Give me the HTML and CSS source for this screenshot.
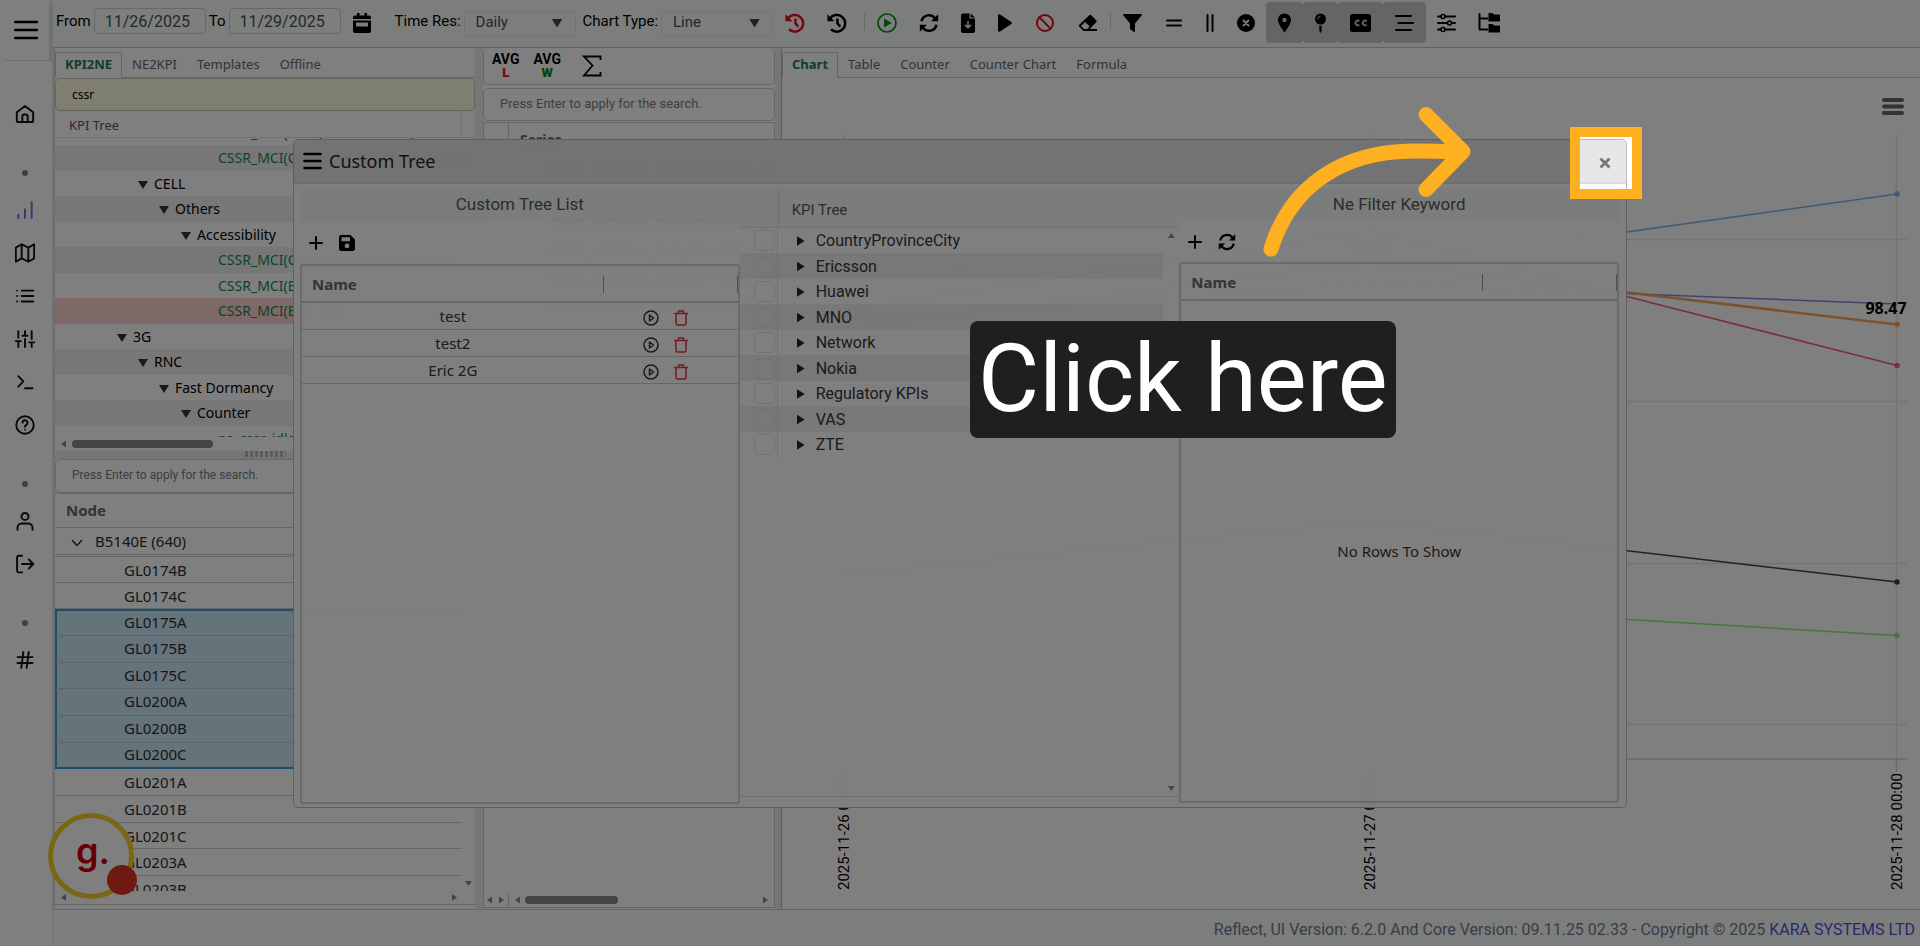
FILE: index.html
```html
<!DOCTYPE html>
<html lang="en">
<head>
<meta charset="utf-8">
<title>Reflect</title>
<link rel="stylesheet" href="styles.css">
</head>
<body>
<div class="app">
  <nav class="sidebar" aria-label="Main">
    <button class="sidebar-toggle" aria-label="Menu"><svg width="24" height="20" viewBox="0 0 24 20"><path d="M1 2h22M1 10h22M1 18h22" stroke="currentColor" stroke-width="2.4" stroke-linecap="round"/></svg></button>
    <div class="nav-group nav-first">
      <a href="#" aria-label="Home"><svg class="nav-icon" viewBox="0 0 24 24"><path d="M3 21.5h18a.8.8 0 0 0 .8-.8V9.8L12 2.3 2.2 9.800v10.900a.8.8 0 0 0 .8.8zM8.800 21.500v-7a2 2 0 0 1 2-2h2.400a2 2 0 0 1 2 2v7"/></svg></a>
    </div>
    <span class="dot"></span>
    <div class="nav-group">
      <a href="#" class="active" aria-label="Charts"><svg class="nav-icon" viewBox="0 0 24 24"><path d="M4 17.500v4M12 11v10.500M20 2.500v19"/></svg></a>
      <a href="#" aria-label="Map"><svg class="nav-icon" viewBox="0 0 24 24"><path d="M1 5.500v17l7-4 8 4 7-4v-17l-7 4-8-4zM8 1.500v17M16 5.500v17"/></svg></a>
      <a href="#" aria-label="List"><svg class="nav-icon" viewBox="0 0 24 24"><path d="M8 5.500h14M8 12h14M8 18.500h14M2.500 5.500h.01M2.500 12h.01M2.500 18.500h.01"/></svg></a>
      <a href="#" aria-label="Settings"><svg class="nav-icon" viewBox="0 0 24 24"><path d="M4 21.500v-7M4 10.500v-8M12 21.500v-9.500M12 8v-5.500M20 21.500v-5.500M20 12v-9.500M1 14.500h6M9 8h6M17 16h6"/></svg></a>
      <a href="#" aria-label="Console"><svg class="nav-icon" viewBox="0 0 24 24"><path d="M4 17.500l6-6.200-6-6.300M12 19.500h9"/></svg></a>
      <a href="#" aria-label="Help"><svg class="nav-icon" viewBox="0 0 24 24"><circle cx="12" cy="12" r="10.500"/><path d="M9 9.200a3 3 0 1 1 4.200 2.900c-.9.500-1.200 1-1.200 1.900M12 17.500h.01"/></svg></a>
    </div>
    <span class="dot"></span>
    <div class="nav-group">
      <a href="#" aria-label="Profile"><svg class="nav-icon" viewBox="0 0 24 24"><circle cx="12" cy="6.500" r="4.200"/><path d="M3 22.500v-2.500a5 5 0 0 1 5-5h8a5 5 0 0 1 5 5v2.500"/></svg></a>
      <a href="#" aria-label="Log out"><svg class="nav-icon" viewBox="0 0 24 24"><path d="M8.500 22h-4a2 2 0 0 1-2-2V4a2 2 0 0 1 2-2h4M16.500 17.500l5.500-5.500-5.500-5.500M22 12H8.500"/></svg></a>
    </div>
    <span class="dot"></span>
    <div class="nav-group nav-last">
      <a href="#" aria-label="Channels"><svg class="nav-icon" viewBox="0 0 24 24"><path d="M3 8.500h18M3 15.500h18M10 2.500L7.500 21.500M16.500 2.500L14 21.500"/></svg></a>
    </div>
  </nav>

  <header class="topbar">
    <label for="from">From</label><input class="date" id="from" value="11/26/2025">
    <label for="to">To</label><input class="date" id="to" value="11/29/2025">
    <button class="calendar" aria-label="Calendar"><svg width="18" height="20" viewBox="0 0 18 20"><path fill="currentColor" fill-rule="evenodd" d="M4 0h2.500v2.500h5V0H14v2.500h2a2 2 0 0 1 2 2V6H0V4.500a2 2 0 0 1 2-2h2zM0 7.500h18V18a2 2 0 0 1-2 2H2a2 2 0 0 1-2-2zM3 9.500v4h12v-4z"/></svg></button>
    <label for="res" class="label-res">Time Res:</label><span class="pick"><select id="res"><option>Daily</option></select></span>
    <label for="type">Chart Type:</label><span class="pick"><select id="type"><option>Line</option></select></span>
    <div class="tools">
      <button class="red" aria-label="Clear history"><svg width="20" height="20" viewBox="0 0 24 24"><path class="s3" d="M3.500 6.800A10 10 0 1 1 4.800 19.500M12.500 6.500v6l3.500 3.800"/><path class="f" d="M.500 1.500v8.500h8.500z"/></svg></button>
      <button aria-label="History"><svg width="20" height="20" viewBox="0 0 24 24"><path class="s3" d="M3.500 6.800A10 10 0 1 1 4.800 19.500M12.500 6.500v6l3.500 3.800"/><path class="f" d="M.500 1.500v8.500h8.500z"/></svg></button>
      <span class="sep"></span>
      <button class="green" aria-label="Run"><svg width="20" height="20" viewBox="0 0 24 24"><circle class="s2" cx="12" cy="12" r="10.800"/><path class="f" d="M8.500 6.500v11l9-5.500z"/></svg></button>
      <button aria-label="Refresh"><svg width="20" height="20" viewBox="0 0 24 24"><path class="s3" d="M3 10A9.200 9.200 0 0 1 19.500 6.500M21 14A9.200 9.200 0 0 1 4.500 17.500"/><path class="f" d="M23 1.500v8.500h-8.500zM1 22.500V14h8.500z"/></svg></button>
      <button aria-label="Download"><svg width="14" height="20" viewBox="0 0 14 20"><path class="f" fill-rule="evenodd" d="M2 .5h6.500V5.500H14V18a2 2 0 0 1-2 2H2a2 2 0 0 1-2-2V2.500a2 2 0 0 1 2-2zM6.300 8v5L4.500 11.300 3.500 12.400 7 15.800l3.500-3.400-1-1.100L7.700 13V8zM9.700.5 14 4.500H9.700z"/></svg></button>
      <button aria-label="Play"><svg width="14" height="20" viewBox="0 0 14 20"><path class="f" d="M0 2.500C0 1.200 1 .8 2 1.400l11.300 7.500q1.200 1.100 0 2.200L2 18.600c-1 .6-2 .2-2-1.100z"/></svg></button>
      <button class="red" aria-label="Stop"><svg width="18" height="20" viewBox="0 0 18 20"><circle class="s2" cx="9" cy="10" r="8"/><path class="s2" d="M3.300 4.300l11.400 11.400"/></svg></button>
      <button aria-label="Erase"><svg width="20" height="20" viewBox="0 0 20 20"><path class="f" fill-rule="evenodd" d="M11.200 2.300q1-.9 2 0l5 5q1 1 0 2L11.800 16H19v2H5.500L1.300 13.800q-1-1 0-2zM7 8.900l-4 4L6.100 16h3l2.700-2.600z"/></svg></button>
      <span class="sep thin"></span>
      <button aria-label="Filter"><svg width="19" height="20" viewBox="0 0 19 20"><path class="f" d="M1 1h17q1.400.4.6 1.600L12 10.500v7.800q-.4 1-1.400.4L7 16v-5.500L.4 2.600Q-.3 1.400 1 1z"/></svg></button>
      <button aria-label="Equals"><svg width="16" height="20" viewBox="0 0 16 20"><path class="s2" d="M1 7.500h14M1 12.500h14"/></svg></button>
      <button aria-label="Parallel"><svg width="8" height="20" viewBox="0 0 8 20"><path class="s2" d="M1.500 2v16M6.500 2v16"/></svg></button>
      <button aria-label="Close"><svg width="18" height="20" viewBox="0 0 18 20"><circle class="f" cx="9" cy="10" r="9"/><path d="M6.500 7.500l5 5M11.500 7.500l-5 5" stroke="#f8fcfa" stroke-width="1.800" stroke-linecap="round"/></svg></button>
      <button class="on" aria-label="Marker"><svg width="13" height="20" viewBox="0 0 13 20"><path class="f" fill-rule="evenodd" d="M6.500.5A6.400 6.400 0 0 1 13 7c0 3.500-3.500 8.500-6.500 12.500C3.500 15.500 0 10.500 0 7A6.400 6.400 0 0 1 6.500.5zm0 4.200a2.200 2.200 0 1 0 0 4.400 2.200 2.200 0 0 0 0-4.400z"/></svg></button>
      <button class="on" aria-label="Pin"><svg width="11" height="20" viewBox="0 0 11 20"><circle class="f" cx="5.500" cy="6" r="5.500"/><path class="f" d="M4.300 12.800h2.400V18l-1.200 2-1.200-2z"/><path d="M2.800 6a2.800 2.800 0 0 1 2.700-2.700" fill="none" stroke="#c8cccb"/></svg></button>
      <button class="on" aria-label="Captions"><svg width="21" height="20" viewBox="0 0 21 20"><rect class="f" y="1" width="21" height="18" rx="2.500"/><path d="M9.300 8.300a2.300 2.300 0 1 0 0 3.400M16.600 8.300a2.300 2.300 0 1 0 0 3.400" fill="none" stroke="#c8cccb" stroke-width="1.800"/></svg></button>
      <button class="on" aria-label="Align"><svg width="19" height="20" viewBox="0 0 19 20"><path class="s2" d="M1 3h15M3.500 10H18M1 17h15"/></svg></button>
      <button aria-label="Options"><svg width="19" height="20" viewBox="0 0 19 20"><path class="s2" d="M1 3.500h3M8 3.500h10M1 10h9.500M14.500 10H18M1 16.500h3M8 16.500h10"/><circle class="s1" cx="6" cy="3.500" r="2"/><circle class="s1" cx="12.500" cy="10" r="2"/><circle class="s1" cx="6" cy="16.500" r="2"/></svg></button>
      <button aria-label="Folder tree"><svg width="22" height="20" viewBox="0 0 22 20"><path class="s2" d="M1.500 1v15.500h8M1.500 5.500h8"/><path class="f" d="M10.500 0h4l1.500 1.500h5q1 0 1 1V7.500q0 1-1 1H10.500zM10.500 11h4l1.500 1.500h5q1 0 1 1V18.500q0 1-1 1H10.500z"/></svg></button>
    </div>
  </header>

  <main class="workspace">
    <section class="col-left">
      <div class="tabs"><button class="tab current">KPI2NE</button><button class="tab">NE2KPI</button><button class="tab">Templates</button><button class="tab">Offline</button></div>
      <input class="search filled" aria-label="Search KPI" value="cssr">
      <div class="tree-head"><span>KPI Tree</span></div>
      <div class="tree-view">
        <ul class="tree">
          <li class="lv5 leaf">CSSR_MCI(Congestion_Ex_In_(Huawei_Cell)</li>
          <li class="lv5 leaf">CSSR_MCI(Congestion_excluded)(Eric_Cell)</li>
          <li class="lv2 open">CELL</li>
          <li class="lv3 open">Others</li>
          <li class="lv4 open">Accessibility</li>
          <li class="lv5 leaf">CSSR_MCI(Congestion_excluded)(Eric</li>
          <li class="lv5 leaf">CSSR_MCI(Eric)</li>
          <li class="lv5 leaf picked">CSSR_MCI(Eric_Cell)</li>
          <li class="lv1 open">3G</li>
          <li class="lv2 open">RNC</li>
          <li class="lv3 open">Fast Dormancy</li>
          <li class="lv4 open">Counter</li>
          <li class="lv5 leaf">ps_cssr_idle</li>
        </ul>
      </div>
      <div class="hscroll"><i class="tri left"></i><i class="thumb"></i></div>
      <div class="splitter"></div>
      <input class="search small" aria-label="Search node" placeholder="Press Enter to apply for the search.">
      <div class="node-grid">
        <div class="node-view">
          <table>
            <thead><tr><th>Node</th></tr></thead>
            <tbody class="group"><tr><td><svg width="12" height="8" viewBox="0 0 12 8"><path d="M1 1l5 5.500L11 1" fill="none" stroke="currentColor" stroke-width="1.500"/></svg>B5140E (640)</td></tr></tbody>
            <tbody class="nodes">
              <tr><td>GL0174B</td></tr><tr><td>GL0174C</td></tr>
              <tr class="sel first"><td>GL0175A</td></tr><tr class="sel"><td>GL0175B</td></tr><tr class="sel"><td>GL0175C</td></tr><tr class="sel"><td>GL0200A</td></tr><tr class="sel"><td>GL0200B</td></tr><tr class="sel last"><td>GL0200C</td></tr>
              <tr><td>GL0201A</td></tr><tr><td>GL0201B</td></tr><tr><td>GL0201C</td></tr><tr><td>GL0203A</td></tr><tr><td>GL0203B</td></tr>
            </tbody>
          </table>
          <i class="tri down"></i>
        </div>
        <div class="hscroll ends"><i class="tri left"></i><i class="tri right"></i></div>
      </div>
    </section>

    <section class="col-mid">
      <div class="mid-tools">
        <button>AVG<b class="l">L</b></button><button>AVG<b class="w">W</b></button>
        <button aria-label="Sum"><svg width="20" height="22" viewBox="0 0 20 22"><path d="M18.500 5V1.500H2l8.500 9L2 20.500h16.500V17" fill="none" stroke="currentColor" stroke-width="1.800"/></svg></button>
      </div>
      <input class="search" aria-label="Search series" placeholder="Press Enter to apply for the search.">
      <div class="series">
        <div class="series-body">
          <ul>
            <li class="series-head">Series</li>
            <li>CSSR_MCI(Eric_Cell),B5140E | GL</li><li>CSSR_MCI(Eric_Cell),B5140E | GL</li><li>CSSR_MCI(Eric_Cell),B5140E | GL</li><li>CSSR_MCI(Eric_Cell),B5140E | GL</li><li>CSSR_MCI(Eric_Cell),B5140E | GL</li><li>CSSR_MCI(Eric_Cell),B5140E | GL</li>
          </ul>
        </div>
        <div class="hscroll mid-scroll"><span class="pin-scroll"><i class="tri left"></i><i class="tri right"></i></span><i class="tri left"></i><i class="thumb"></i><i class="tri right"></i></div>
      </div>
    </section>

    <section class="col-chart">
      <div class="tabs"><button class="tab current">Chart</button><button class="tab">Table</button><button class="tab">Counter</button><button class="tab">Counter Chart</button><button class="tab">Formula</button></div>
      <div class="chart">
        <svg viewBox="782 78 1138 831" preserveAspectRatio="xMaxYMin meet" fill="none">
          <path d="M844.500 135v624M1370.500 135v624M1896.500 135v624M800 239.500h1107M800 401.500h1107M800 563.500h1107M800 724.500h1107" stroke="#e6e6e6" stroke-width="1.500"/>
          <path d="M800 759h1107M1896.500 759v13M1370.500 759v13M844.500 759v13" stroke="#ccd6eb" stroke-width="1.500"/>
          <path d="M844 270L1370 268L1897 194" stroke="#7cb5ec" stroke-width="1.500"/>
          <path d="M844 320L1370 284L1897 304" stroke="#8085e9" stroke-width="1.500"/>
          <path d="M844 330L1370 262L1897 324.500" stroke="#f7a35c" stroke-width="2.500"/>
          <path d="M844 310L1370 231L1897 365.500" stroke="#f15c80" stroke-width="1.500"/>
          <path d="M844 575L1370 521L1897 582" stroke="#434348" stroke-width="1.500"/>
          <path d="M844 650L1370 604L1897 635.500" stroke="#90ed7d" stroke-width="1.500"/>
          <circle cx="1897" cy="194" r="2.800" fill="#7cb5ec"/><circle cx="1897" cy="324.500" r="2.800" fill="#f7a35c"/><circle cx="1897" cy="365.500" r="2.800" fill="#f15c80"/><circle cx="1897" cy="582" r="2.800" fill="#434348"/><circle cx="1897" cy="635.500" r="2.800" fill="#90ed7d"/>
          <text class="value" x="1886" y="314">98.47</text>
          <text class="value" x="1370" y="252">98.86</text>
          <g class="axis"><text transform="translate(849 890) rotate(-90)">2025-11-26 00:00</text><text transform="translate(1375 890) rotate(-90)">2025-11-27 00:00</text><text transform="translate(1902 890) rotate(-90)">2025-11-28 00:00</text></g>
          <path d="M1884 100h18M1884 106.500h18M1884 113h18" stroke="#666" stroke-width="4" stroke-linecap="round"/>
        </svg>
      </div>
    </section>
  </main>

  <footer class="footer">Reflect, UI Version: 6.2.0 And Core Version: 09.11.25 02.33 - Copyright © 2025&nbsp;<a href="#">KARA SYSTEMS LTD</a></footer>
</div>

<div class="badge"><span>g.</span><i></i></div>

<div class="modal" role="dialog" aria-label="Custom Tree">
  <div class="modal-head"><svg width="19" height="18" viewBox="0 0 19 18"><path d="M1.500 2h16M1.500 9h16M1.500 16h16" stroke="#000" stroke-width="2.600" stroke-linecap="round"/></svg><h2>Custom Tree</h2><button aria-label="Close dialog"><svg width="12" height="12" viewBox="0 0 12 12"><path d="M1.500 1.500l9 9M10.500 1.500l-9 9" stroke="currentColor" stroke-width="3"/></svg></button></div>
  <div class="modal-body">
    <section class="pane">
      <h3>Custom Tree List</h3>
      <div class="pane-tools"><button aria-label="Add"><svg width="14" height="14" viewBox="0 0 14 14"><path class="s2" d="M7 1v12M1 7h12"/></svg></button><button aria-label="Save"><svg width="16" height="16" viewBox="0 0 16 16"><path class="f" fill-rule="evenodd" d="M2 0h9.500L16 4.500V14a2 2 0 0 1-2 2H2a2 2 0 0 1-2-2V2a2 2 0 0 1 2-2zm.5 2.200v4h8.500v-4zM8 8.500a2.400 2.400 0 1 0 0 4.800 2.400 2.400 0 0 0 0-4.800z"/></svg></button></div>
      <div class="grid">
        <table>
          <thead><tr><th class="name">Name</th><th class="act"></th></tr></thead>
          <tbody>
            <tr><td>test</td><td class="act"><div><button aria-label="Run test"><svg width="16" height="16" viewBox="0 0 16 16"><circle class="s1" cx="8" cy="8" r="7"/><path class="s1" d="M6.500 5v6l4-3z"/></svg></button><button class="del" aria-label="Delete test"><svg width="14" height="16" viewBox="0 0 14 16"><path class="s1" d="M.500 3.500h13M2 3.500V13.500q0 1.500 1.500 1.500h7q1.500 0 1.500-1.500V3.500M4.500 3.200V1h5v2.200"/></svg></button></div></td></tr>
            <tr><td>test2</td><td class="act"><div><button aria-label="Run test2"><svg width="16" height="16" viewBox="0 0 16 16"><circle class="s1" cx="8" cy="8" r="7"/><path class="s1" d="M6.500 5v6l4-3z"/></svg></button><button class="del" aria-label="Delete test2"><svg width="14" height="16" viewBox="0 0 14 16"><path class="s1" d="M.500 3.500h13M2 3.500V13.500q0 1.500 1.500 1.500h7q1.500 0 1.500-1.500V3.500M4.500 3.200V1h5v2.200"/></svg></button></div></td></tr>
            <tr><td>Eric 2G</td><td class="act"><div><button aria-label="Run Eric 2G"><svg width="16" height="16" viewBox="0 0 16 16"><circle class="s1" cx="8" cy="8" r="7"/><path class="s1" d="M6.500 5v6l4-3z"/></svg></button><button class="del" aria-label="Delete Eric 2G"><svg width="14" height="16" viewBox="0 0 14 16"><path class="s1" d="M.500 3.500h13M2 3.500V13.500q0 1.500 1.500 1.500h7q1.500 0 1.500-1.500V3.500M4.500 3.200V1h5v2.200"/></svg></button></div></td></tr>
          </tbody>
        </table>
      </div>
    </section>
    <section class="pane kpi">
      <div class="kpi-head"><span>KPI Tree</span></div>
      <div class="kpi-view">
        <ul>
          <li><label><input type="checkbox"><span>CountryProvinceCity</span></label></li>
          <li><label><input type="checkbox"><span>Ericsson</span></label></li>
          <li><label><input type="checkbox"><span>Huawei</span></label></li>
          <li><label><input type="checkbox"><span>MNO</span></label></li>
          <li><label><input type="checkbox"><span>Network</span></label></li>
          <li><label><input type="checkbox"><span>Nokia</span></label></li>
          <li><label><input type="checkbox"><span>Regulatory KPIs</span></label></li>
          <li><label><input type="checkbox"><span>VAS</span></label></li>
          <li><label><input type="checkbox"><span>ZTE</span></label></li>
        </ul>
        <div class="vscroll"><i class="tri up"></i><i class="tri down"></i></div>
      </div>
    </section>
    <section class="pane right">
      <h3>Ne Filter Keyword</h3>
      <div class="pane-tools"><button aria-label="Add keyword"><svg width="14" height="14" viewBox="0 0 14 14"><path class="s2" d="M7 1v12M1 7h12"/></svg></button><button aria-label="Reload"><svg width="18" height="18" viewBox="0 0 24 24"><path class="s3" d="M3 10A9.200 9.200 0 0 1 19.500 6.500M21 14A9.200 9.200 0 0 1 4.500 17.500"/><path class="f" d="M23 1.500v8.500h-8.500zM1 22.500V14h8.500z"/></svg></button></div>
      <div class="grid">
        <table><thead><tr><th class="name">Name</th><th class="act"></th></tr></thead></table>
        <p class="empty">No Rows To Show</p>
      </div>
    </section>
  </div>
</div>

<div class="spotlight"></div>
<svg class="arrow" viewBox="1260 100 220 165" width="220" height="165" fill="none" stroke="#ffb020" stroke-width="15" stroke-linecap="round" stroke-linejoin="round"><path d="M1271 249C1290 188 1340 151 1414 151Q1438 151 1461 152M1426 114.500L1463 151.500L1426 189.500"/></svg>
<div class="callout">Click here</div>
</body>
</html>
```
FILE: styles.css
```css
* { box-sizing: border-box; }
body { margin: 0; height: 100vh; overflow: hidden; position: relative; background: #fff; font-family: Roboto, sans-serif; color: #212529; }
button, input, select { font: inherit; color: inherit; margin: 0; }
button { background: none; border: 0; padding: 0; display: inline-flex; align-items: center; justify-content: center; }
ul { list-style: none; margin: 0; padding: 0; }
a { text-decoration: none; color: #5050e0; }
h2, h3, p { margin: 0; font-weight: 400; }
table { border-collapse: separate; border-spacing: 0; width: 100%; table-layout: fixed; }
svg { display: block; flex: none; }
.f { fill: currentColor; }
.s1, .s2, .s3 { fill: none; stroke: currentColor; stroke-width: 1.5; stroke-linejoin: round; stroke-linecap: round; }
.s2 { stroke-width: 2; }
.s3 { stroke-width: 3; stroke-linecap: butt; }

.app { height: 100%; display: grid; grid-template: 47px minmax(0, 1fr) 35px / 53px minmax(0, 1fr); }

.sidebar { grid-row: 1 / 4; border-right: 1px solid #e4e6e8; color: #111; display: flex; flex-direction: column; align-items: center; padding-right: 3px; }
.sidebar-toggle { width: 100%; height: 60px; padding-left: 2px; flex: none; color: #000; box-shadow: 3px 1px #e2e2e2; }
.nav-group { display: flex; flex-direction: column; gap: 1px; }
.nav-group a { height: 42px; width: 48px; display: flex; align-items: center; justify-content: center; color: inherit; }
.nav-group .active { color: #7070d8; }
.nav-first { padding-top: 33px; }
.nav-icon { width: 20px; height: 20px; fill: none; stroke: currentColor; stroke-width: 2.3; stroke-linecap: round; stroke-linejoin: round; }
.dot { flex: none; width: 6px; height: 6px; border-radius: 50%; background: #7b7f9e; margin: 35px 0 13px; }

.topbar { background: #f8fcfa; display: flex; align-items: center; padding: 0 0 5px 3px; font-size: 15px; color: #000; }
.date { width: 112px; height: 26px; margin: 0 3px; padding: 0 10px; border: 1px solid #ccd0d2; border-radius: 4px; background: #fbfdfc; color: #495057; font-size: 16px; }
.calendar { width: 36px; height: 30px; padding-top: 4px; }
.label-res { padding-left: 15px; }
.pick { margin: 5px 7px 0 3px; position: relative; }
.pick::after { content: ""; position: absolute; right: 13px; top: 8px; width: 11px; height: 9px; background: #444; clip-path: polygon(0 0, 100% 0, 50% 100%); pointer-events: none; }
.pick select { appearance: none; width: 112px; height: 26px; padding: 0 0 3px 11px; border: 1px solid #e6eae9; border-radius: 4px; background: #f8fbfa; color: #495057; display: block; }
.tools { display: flex; align-items: center; align-self: flex-start; height: 47px; margin-left: -6px; color: #000; }
.tools button { height: 41px; padding: 0 12px; border-radius: 4px; margin-bottom: 2px; }
.tools button:nth-of-type(-n+5), .tools button:nth-last-of-type(-n+7) { padding: 0 11px; }
.tools .on:nth-of-type(n) { background: #c8cccb; padding: 0 12px; }
.red { color: #e0101a; }
.tools .green { color: #0a8a14; }
.sep { width: 1px; height: 17px; background: #d0d4d3; margin: 0 1px 4px 6px; }
.sep.thin { margin: 0 0 4px; }

.workspace { border-top: 1px solid #c4c8c8; display: grid; grid-template-columns: 422px 8px 292px 6px minmax(0, 1fr); background: #ececec; min-height: 0; margin-bottom: 1px; border-bottom: 1px solid #c8cccb; }
.workspace > section { background: #fff; min-width: 0; min-height: 0; display: flex; flex-direction: column; }
.col-left { border-left: 2px solid #ddd; }
.col-mid { grid-column: 3; }
.col-chart { grid-column: 5; border-left: 1px solid #bbb; }
.tabs { display: flex; flex: none; height: 30px; padding-top: 4px; border-bottom: 1px solid #ccc; font-family: "Noto Sans", sans-serif; font-size: 13px; color: #666; }
.tab { padding: 0 9px 2px; height: 26px; border: 1px solid transparent; }
.tab.current { font-weight: 700; color: #1f7d52; border-color: #c8c8c8; border-bottom-color: #fff; background: #fff; }
.search { flex: none; width: 100%; height: 33px; padding: 0 16px; border: 1px solid #ccc; border-radius: 5px; background: #fff; font-size: 13px; }
.search::placeholder { color: #7c7c7c; opacity: 1; }
.filled { background: #ffffe0; font-family: "Noto Sans", sans-serif; font-size: 12px; color: #000; border-color: #c8c8b8; }
.small { font-size: 12px; height: 34px; padding-bottom: 2px; }
.tree-head { flex: none; height: 27px; padding: 0 13px 0 14px; border-bottom: 1px solid #e4e4e4; font: 13px/28px "Noto Sans", sans-serif; color: #555; display: flex; }
.tree-head span { flex: 1; border-right: 1px solid #e4e4e4; }
.tree-view { flex: none; height: 299px; overflow: hidden; }
.tree { margin-top: -18px; font: 14px/25px "Noto Sans", sans-serif; white-space: nowrap; color: #000; }
.tree li { height: 25px; overflow: hidden; }
.tree li:nth-child(even) { height: 26px; background: #efefef; }
.tree .leaf { color: #198754; }
.tree .picked { background: #ffd0d0 !important; }
.open::before { content: ""; display: inline-block; width: 10px; height: 8px; background: #333; clip-path: polygon(0 0, 100% 0, 50% 100%); margin-right: 6px; }
.lv1 { padding-left: 62px; }
.lv2 { padding-left: 83px; }
.lv3 { padding-left: 104px; }
.lv4 { padding-left: 126px; }
.lv5 { padding-left: 163px; }
.tri { display: block; flex: none; background: #888; width: 5px; height: 7px; }
.tri.left { clip-path: polygon(100% 0, 100% 100%, 0 50%); }
.tri.right { clip-path: polygon(0 0, 100% 50%, 0 100%); }
.tri.up, .tri.down { width: 7px; height: 5px; clip-path: polygon(0 0, 100% 0, 50% 100%); }
.tri.up { clip-path: polygon(50% 0, 100% 100%, 0 100%); }
.hscroll { flex: none; height: 14px; display: flex; align-items: center; padding: 0 6px; gap: 6px; }
.hscroll .thumb { width: 141px; height: 8px; border-radius: 4px; background: #888; }
.ends { justify-content: space-between; padding-right: 18px; border-bottom: 1px solid #ccc; }
.splitter { flex: none; height: 8px; background: #ececec; display: flex; justify-content: center; }
.splitter::after { content: ""; width: 42px; height: 6px; background: radial-gradient(circle, #aaa 1px, transparent 2px) 0 0 / 5px 3px; }
.node-grid { flex: 1; min-height: 0; display: flex; flex-direction: column; margin-bottom: 4px; font: 15px/20px "Noto Sans", sans-serif; }
.node-view { flex: 1; min-height: 0; overflow: hidden; display: flex; padding-right: 3px; gap: 3px; align-items: flex-end; }
.node-view table { flex: 1; align-self: flex-start; }
.node-view .tri { margin-bottom: 5px; }
.node-grid th { height: 35px; text-align: left; padding: 0 11px 2px; color: #666; border-bottom: 1px solid #ccc; border-top: 1px solid #ccc; }
.node-grid td { padding: 0 0 0 69px; height: 26px; border-bottom: 1px solid #ccc; color: #2a2e32; }
.node-grid .group td { height: 29px; padding: 0 0 0 16px; border-bottom: 3px double #ccc; }
.group svg { display: inline-block; margin-right: 12px; }
.nodes tr:nth-child(3n) td, .nodes tr:nth-child(3n+1) td { height: 27px; }
.node-grid .nodes tr:first-child td { height: 26px; }
.nodes .sel td { background: #cbe6f7; border-left: 2px solid #3c9ad8; padding: 0 0 2px 67px; border-bottom-color: #c0c8d0; }
.nodes .first td { border-top: 2px solid #3c9ad8; }
.nodes .last td { border-bottom: 2px solid #3c9ad8; }

.mid-tools { flex: none; height: 37px; display: flex; padding-left: 8px; gap: 14px; border: 1px solid #ccc; border-top: 0; border-radius: 5px; color: #000; }
.mid-tools button { flex-direction: column; font-weight: 700; font-size: 14px; line-height: 13px; }
.mid-tools button:last-child { margin-left: 7px; }
.mid-tools .l { color: #e0101a; font-size: 13px; }
.mid-tools .w { color: #0a8a14; font-size: 13px; }
.col-mid .search { margin: 3px 0 1px; padding-bottom: 2px; }
.series { flex: 1; min-height: 0; border: 1px solid #ccc; display: flex; flex-direction: column; margin-bottom: 1px; font: 15px/27px "Noto Sans", sans-serif; }
.series-body { flex: 1; overflow: hidden; padding-left: 24px; }
.series-body ul { border-left: 1px solid #ccc; white-space: nowrap; }
.series-body li { padding-left: 40px; }
.series-body .series-head { padding-left: 11px; line-height: 33px; font-weight: 700; font-size: 14px; color: #666; }
.mid-scroll { gap: 7px; padding: 0 6px 0 3px; }
.mid-scroll .thumb { width: 93px; margin-right: auto; margin-left: -2px; }
.pin-scroll { display: flex; gap: 7px; padding-right: 4px; margin-right: -1px; align-items: center; height: 14px; border-right: 1px solid #ccc; }
.chart { flex: 1; min-height: 0; }
.chart svg { width: 100%; height: 100%; }
.value { font: 700 16px "Noto Sans", sans-serif; fill: #000; text-anchor: middle; }
.axis { font-size: 15px; fill: #000; }

.footer { background: #f8fcfa; display: flex; justify-content: flex-end; align-items: center; padding: 2px 5px 0 0; font-size: 16px; color: #74788d; }

.badge { position: absolute; left: 48px; top: 813px; width: 86px; height: 86px; border: 5px solid #f5cf28; border-radius: 50%; background: #fff; display: flex; align-items: center; justify-content: center; color: #cc0008; font: 600 36px/1 Inter, sans-serif; padding: 0 0 10px 4px; }
.badge i { position: absolute; right: -8px; bottom: -1px; width: 30px; height: 30px; border-radius: 50%; background: #dc3424; }

.modal { position: absolute; left: 293px; right: 293px; top: 139px; bottom: 138px; border: 1px solid #bbb; border-radius: 5px; background: #fff; opacity: .98; display: flex; flex-direction: column; }
.modal-head { flex: none; height: 44px; display: flex; align-items: center; gap: 7px; padding: 0 15px 0 9px; background: #e7e7e7; border-bottom: 2px solid #dcdcdc; border-radius: 4px 4px 0 0; }
.modal-head h2 { font: 18px/24px "Noto Sans", sans-serif; flex: 1; color: #222; }
.modal-head button { color: #777; padding: 3px 0 0; }
.modal-body { flex: 1; min-height: 0; display: grid; grid-template-columns: repeat(3, minmax(0, 1fr)); padding: 4px 7px 3px 6px; }
.pane { min-width: 0; display: flex; flex-direction: column; color: #333; }
.pane h3 { height: 34px; line-height: 32px; text-align: center; background: #f5faf8; font-size: 17px; color: #555; flex: none; }
.pane-tools { flex: none; height: 42px; display: flex; align-items: center; padding-left: 9px; gap: 16px; color: #000; }
.right .pane-tools { height: 40px; }
.grid { flex: 1; border: 2px solid #d4d4d4; border-radius: 3px; display: flex; flex-direction: column; font: 15px/20px "Noto Sans", sans-serif; }
.right .grid { margin-bottom: 1px; }
.grid th { height: 37px; text-align: left; padding: 0 10px; color: #666; border-bottom: 2px solid #d0d0d0; }
.grid th::after { content: ""; float: right; width: 1px; height: 17px; background: #999; margin: 2px -10px 0 0; }
.grid .act { width: 134px; }
.grid td { height: 27px; padding: 0; text-align: center; border-bottom: 1px solid #ccc; }
.act div { display: flex; gap: 15px; padding: 4px 0 0 39px; }
.del { color: #e8323c; }
.empty { margin: auto; }
.kpi { font-size: 16px; border-bottom: 1px solid #ddd; margin-bottom: 7px; }
.kpi-head { flex: none; height: 40px; background: #f5faf8; border-bottom: 1px solid #e4e4e4; padding-left: 38px; display: flex; font-size: 15px; color: #555; }
.kpi-head span { border-left: 1px solid #ddd; padding: 4px 0 0 13px; line-height: 36px; }
.kpi-view { flex: 1; display: flex; }
.kpi ul { flex: 1; }
.kpi li { height: 25px; }
.kpi li:nth-child(even) { height: 26px; background: #f0f0f0; }
.kpi label { display: flex; align-items: center; height: 100%; padding-left: 14px; }
.kpi input { appearance: none; width: 21px; height: 21px; border: 1px solid #e4e4e4; border-radius: 5px; }
.kpi label span { border-left: 1px solid #ddd; margin-left: 2px; padding-left: 19px; line-height: 25px; }
.kpi label span::before { content: ""; display: inline-block; width: 8px; height: 10px; background: #222; clip-path: polygon(0 0, 100% 50%, 0 100%); margin-right: 11px; }
.vscroll { width: 16px; display: flex; flex-direction: column; justify-content: space-between; align-items: center; padding: 5px 0; }

.spotlight { position: absolute; right: 278px; top: 127px; width: 72px; height: 72px; border: 10px solid #ffb020; box-shadow: 0 0 0 2000px rgba(0, 0, 0, .5); }
.arrow { position: absolute; left: 1260px; top: 100px; }
.callout { position: absolute; left: 970px; top: 321px; padding: 0 8px; height: 117px; border-radius: 8px; background: #1f1f1f; color: #fff; font: 94px/117px Roboto, sans-serif; white-space: nowrap; }
```
